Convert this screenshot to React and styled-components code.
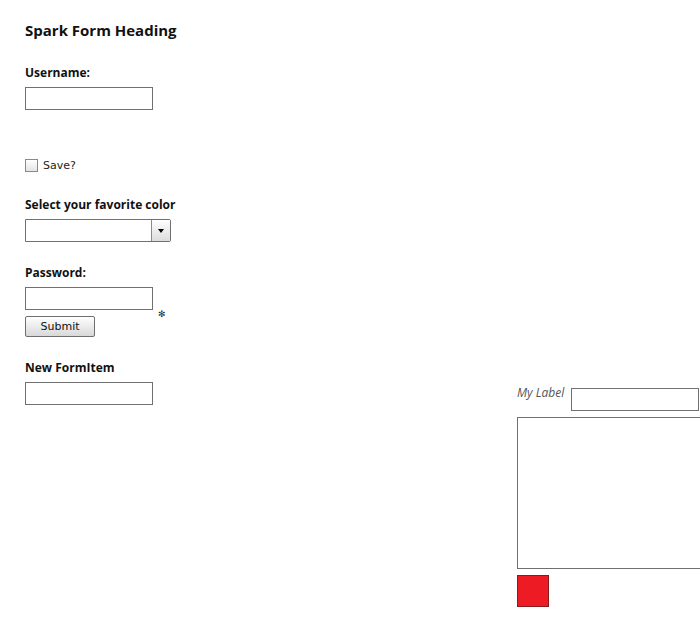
import styled, { createGlobalStyle } from "styled-components";

const Global = createGlobalStyle`
  html, body {
    margin: 0;
    padding: 0;
    background: #ffffff;
  }
  body {
    font-family: "Open Sans", "DejaVu Sans", sans-serif;
    color: #000;
  }
`

const Page = styled.div`
  display: flex;
  width: 700px;
  height: 628px;
  padding: 20px 0 0 25px;
  box-sizing: border-box;
  overflow: hidden;
`

const LeftCol = styled.div`
  display: flex;
  flex-direction: column;
  width: 492px;
  flex-shrink: 0;
`

const Heading = styled.h1`
  margin: 0 0 25px 0;
  font-family: "Open Sans", sans-serif;
  font-size: 15px;
  font-weight: 700;
  line-height: 20px;
  color: #111;
`

const Group = styled.div`
  display: flex;
  flex-direction: column;
  align-items: flex-start;
  margin-bottom: ${(p) => p.$gap ?? 23}px;
`

const Label = styled.label`
  font-family: "Open Sans", sans-serif;
  font-size: 12px;
  font-weight: 700;
  line-height: 16px;
  color: #111;
  margin-bottom: 6px;
`

const TextInput = styled.input`
  width: 128px;
  height: 23px;
  box-sizing: border-box;
  border: 1px solid #707070;
  background: #fff;
  margin: 0;
  padding: 0 3px;
  outline: none;
`

const InputRow = styled.div`
  display: flex;
  align-items: flex-end;
`

const Star = styled.span`
  font-family: "DejaVu Sans", sans-serif;
  font-size: 9px;
  line-height: 9px;
  color: #222;
  margin: 0 0 -9px 5px;
`

const CheckRow = styled.div`
  display: flex;
  align-items: center;
  height: 16px;
  margin: 47px 0 24px 0;
`

const Box = styled.span`
  width: 11px;
  height: 11px;
  border: 1px solid #8a8a8a;
  background: linear-gradient(#fff, #e4e4e4);
  margin-right: 5px;
`

const CheckText = styled.span`
  font-family: "DejaVu Sans", sans-serif;
  font-size: 11px;
  color: #222;
`

const Select = styled.div`
  display: flex;
  width: 146px;
  height: 23px;
  box-sizing: border-box;
  border: 1px solid #707070;
  border-radius: 0 2px 2px 0;
  background: #fff;
`

const SelectField = styled.div`
  flex: 1;
`

const SelectButton = styled.div`
  width: 18px;
  border-left: 1px solid #8a8a8a;
  background: linear-gradient(#ffffff, #dcdcdc);
  display: flex;
  align-items: center;
  justify-content: center;
`

const Arrow = styled.span`
  width: 0;
  height: 0;
  border-left: 3.5px solid transparent;
  border-right: 3.5px solid transparent;
  border-top: 4px solid #000;
  margin-top: 1px;
`

const Button = styled.button`
  width: 70px;
  height: 21px;
  margin-top: 6px;
  padding: 0;
  border: 1px solid #6f6f6f;
  border-radius: 2px;
  background: linear-gradient(#ffffff, #d8d8d8);
  font-family: "DejaVu Sans", sans-serif;
  font-size: 11px;
  color: #111;
`

const RightCol = styled.div`
  display: flex;
  flex-direction: column;
  padding-top: 368px;
`

const MyLabelRow = styled.div`
  display: flex;
  align-items: flex-start;
  gap: 7px;
`

const ItalicLabel = styled.span`
  font-family: "Open Sans", sans-serif;
  font-style: italic;
  font-size: 12px;
  line-height: 16px;
  color: #555;
  margin-top: -3px;
`

const TextArea = styled.div`
  width: 200px;
  height: 152px;
  box-sizing: border-box;
  border: 1px solid #707070;
  margin-top: 6px;
`

const Swatch = styled.div`
  width: 32px;
  height: 32px;
  box-sizing: border-box;
  background: #ed1c24;
  border: 1px solid #8b1a1e;
  margin-top: 6px;
`

export default function App() {
  return (
    <>
      <Global />
      <Page>
        <LeftCol>
          <Heading>Spark Form Heading</Heading>
          <Group $gap={0}>
            <Label>Username:</Label>
            <TextInput />
          </Group>
          <CheckRow>
            <Box />
            <CheckText>Save?</CheckText>
          </CheckRow>
          <Group>
            <Label>Select your favorite color</Label>
            <Select>
              <SelectField />
              <SelectButton>
                <Arrow />
              </SelectButton>
            </Select>
          </Group>
          <Group>
            <Label>Password:</Label>
            <InputRow>
              <TextInput type="password" />
              <Star>✻</Star>
            </InputRow>
            <Button>Submit</Button>
          </Group>
          <Group>
            <Label>New FormItem</Label>
            <TextInput />
          </Group>
        </LeftCol>
        <RightCol>
          <MyLabelRow>
            <ItalicLabel>My Label</ItalicLabel>
            <TextInput />
          </MyLabelRow>
          <TextArea />
          <Swatch />
        </RightCol>
      </Page>
    </>
  );
}
